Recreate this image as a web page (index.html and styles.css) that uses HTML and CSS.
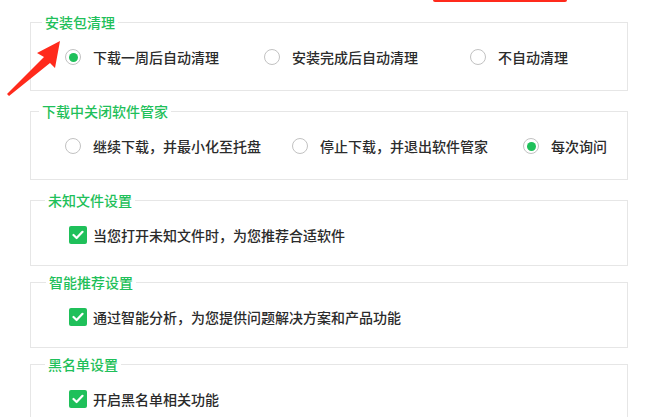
FILE: index.html
```html
<!DOCTYPE html>
<html lang="zh-CN">
<head>
<meta charset="utf-8">
<title>设置</title>
<link rel="stylesheet" href="styles.css">
</head>
<body>
<div class="page">
  <div class="top-mark"></div>
  <svg class="arrow" width="70" height="75" viewBox="0 0 70 75" aria-hidden="true">
    <polygon points="60,11 37,23 44,27 7,64 9,66 50,33 55,38" fill="#ff2a1c"/>
  </svg>

  <fieldset class="group group-radio">
    <legend class="group-title title-a">安装包清理</legend>
    <div class="options cols-a">
      <label class="opt"><span class="radio is-checked"></span><span class="opt-text">下载一周后自动清理</span></label>
      <label class="opt"><span class="radio"></span><span class="opt-text">安装完成后自动清理</span></label>
      <label class="opt"><span class="radio"></span><span class="opt-text">不自动清理</span></label>
    </div>
  </fieldset>

  <fieldset class="group group-radio">
    <legend class="group-title title-b">下载中关闭软件管家</legend>
    <div class="options cols-b">
      <label class="opt"><span class="radio"></span><span class="opt-text">继续下载，并最小化至托盘</span></label>
      <label class="opt"><span class="radio"></span><span class="opt-text">停止下载，并退出软件管家</span></label>
      <label class="opt"><span class="radio is-checked"></span><span class="opt-text">每次询问</span></label>
    </div>
  </fieldset>

  <fieldset class="group group-check">
    <legend class="group-title title-c">未知文件设置</legend>
    <label class="opt check-opt"><span class="check"><svg width="12" height="10" viewBox="0 0 12 10"><path d="M1.5 5 L4.6 8 L10.5 1.8" fill="none" stroke="#fff" stroke-width="2.2" stroke-linecap="round" stroke-linejoin="round"/></svg></span><span class="opt-text">当您打开未知文件时，为您推荐合适软件</span></label>
  </fieldset>

  <fieldset class="group group-check">
    <legend class="group-title title-d">智能推荐设置</legend>
    <label class="opt check-opt"><span class="check"><svg width="12" height="10" viewBox="0 0 12 10"><path d="M1.5 5 L4.6 8 L10.5 1.8" fill="none" stroke="#fff" stroke-width="2.2" stroke-linecap="round" stroke-linejoin="round"/></svg></span><span class="opt-text">通过智能分析，为您提供问题解决方案和产品功能</span></label>
  </fieldset>

  <fieldset class="group group-check">
    <legend class="group-title title-c">黑名单设置</legend>
    <label class="opt check-opt"><span class="check"><svg width="12" height="10" viewBox="0 0 12 10"><path d="M1.5 5 L4.6 8 L10.5 1.8" fill="none" stroke="#fff" stroke-width="2.2" stroke-linecap="round" stroke-linejoin="round"/></svg></span><span class="opt-text">开启黑名单相关功能</span></label>
  </fieldset>
</div>
</body>
</html>
```

FILE: styles.css
```css
html, body {
  margin: 0;
  padding: 0;
  background: #fff;
}

body {
  font-family: "Noto Sans CJK SC", "Noto Sans", sans-serif;
  font-size: 14px;
  font-weight: 500;
  color: #2b2b2b;
  overflow: hidden;
}

.page {
  position: relative;
  width: 650px;
  height: 417px;
  padding: 14px 0 0 30px;
  box-sizing: border-box;
}

.top-mark {
  position: absolute;
  left: 433px;
  top: 0;
  width: 134px;
  height: 2px;
  background: #ff2a1c;
  border-radius: 0 0 3px 3px;
}

.arrow {
  position: absolute;
  left: 0;
  top: 30px;
}

.group {
  width: 598px;
  box-sizing: border-box;
  margin: 0;
  min-width: 0;
  border: 1px solid #e6e6e6;
  padding: 0;
}

.group-radio {
  margin-bottom: 12px;
  padding: 18px 0 24px 0;
}

.group-check {
  margin-bottom: 8px;
  padding: 18px 0 21px 0;
}

.group-title {
  font-size: 14px;
  line-height: 16px;
  color: #1fc05a;
  padding: 0 3px;
}

.title-a { margin-left: 11px; }
.title-b { margin-left: 8px; }
.title-c { margin-left: 14px; }
.title-d { margin-left: 15px; }

.options {
  display: grid;
  align-items: center;
  margin-left: 34px;
}

.cols-a { grid-template-columns: 199px 206px auto; }
.cols-b { grid-template-columns: 227px 231px auto; }

.opt {
  display: flex;
  align-items: center;
  height: 18px;
  line-height: 18px;
  white-space: nowrap;
}

.check-opt {
  margin-left: 38px;
}

.opt-text {
  display: block;
}

.radio {
  width: 16px;
  height: 16px;
  box-sizing: border-box;
  border: 1px solid #c2c2c2;
  border-radius: 50%;
  margin-right: 12px;
  display: flex;
  align-items: center;
  justify-content: center;
  flex: none;
  background: #fff;
}

.radio.is-checked::after {
  content: "";
  width: 9px;
  height: 9px;
  border-radius: 50%;
  background: #1fc05a;
}

.check {
  width: 18px;
  height: 18px;
  border-radius: 2px;
  background: #1fc05a;
  margin-right: 6px;
  display: flex;
  align-items: center;
  justify-content: center;
  flex: none;
}

.check svg {
  display: block;
}
```
